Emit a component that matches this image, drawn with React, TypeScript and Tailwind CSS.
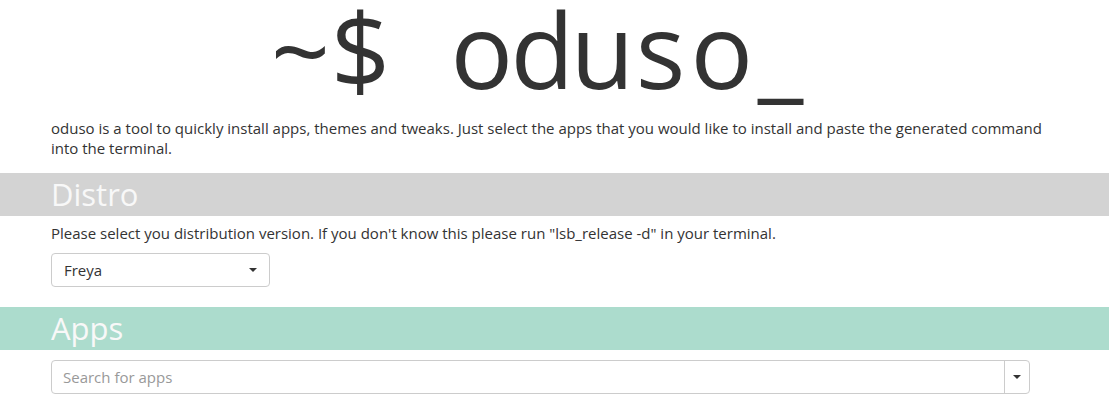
import React from "react";

const title = ["~", "$", " ", "o", "d", "u", "s", "o", "_"];

function Caret() {
  return (
    <span className="inline-block w-0 h-0 border-x-[4px] border-x-transparent border-t-[4px] border-t-[#333]" />
  );
}

function Band({ label, color }: { label: string; color: string }) {
  return (
    <div className={`w-full ${color}`}>
      <h2 className="ml-[51px] py-[5px] text-[31px] leading-[33px] font-normal text-[#f8f8f8]">
        {label}
      </h2>
    </div>
  );
}

export default function App() {
  return (
    <div
      className="w-[1109px] h-[400px] overflow-hidden bg-white text-[#333] text-[15px]"
      style={{ fontFamily: '"Open Sans", "Liberation Sans", sans-serif' }}
    >
      {/* Header */}
      <div className="ml-[51px] w-[979px]">
        <h1 className="flex justify-center text-[104px] leading-[98px] font-normal text-[#333] whitespace-pre">
          {title.map((c, i) => (
            <span key={i} className="inline-block w-[60px] text-center">
              {c}
            </span>
          ))}
        </h1>
        <p className="mt-[20px] w-[992px] leading-[20px]">
          oduso is a tool to quickly install apps, themes and tweaks. Just select the apps that you would like to install and paste the generated command into the terminal.
        </p>
      </div>

      {/* Distro */}
      <div className="mt-[15px]">
        <Band label="Distro" color="bg-[#d3d3d3]" />
      </div>
      <div className="ml-[51px] w-[979px]">
        <p className="mt-[7px] leading-[20px]">
          Please select you distribution version. If you don't know this please run "lsb_release -d" in your terminal.
        </p>
        <div className="mt-[10px] w-[219px] h-[34px] border border-[#ccc] rounded-[4px] flex items-center justify-between pl-[12px] pr-[12px]">
          <span className="text-[#333]">Freya</span>
          <Caret />
        </div>
      </div>

      {/* Apps */}
      <div className="mt-[20px]">
        <Band label="Apps" color="bg-[#acdccd]" />
      </div>
      <div className="ml-[51px] w-[979px] mt-[10px]">
        <div className="h-[34px] border border-[#ccc] rounded-[4px] flex">
          <div className="flex-1 flex items-center pl-[11px] text-[#999]">Search for apps</div>
          <div className="w-[25px] border-l border-[#ccc] flex items-center justify-center">
            <Caret />
          </div>
        </div>
      </div>
    </div>
  );
}
